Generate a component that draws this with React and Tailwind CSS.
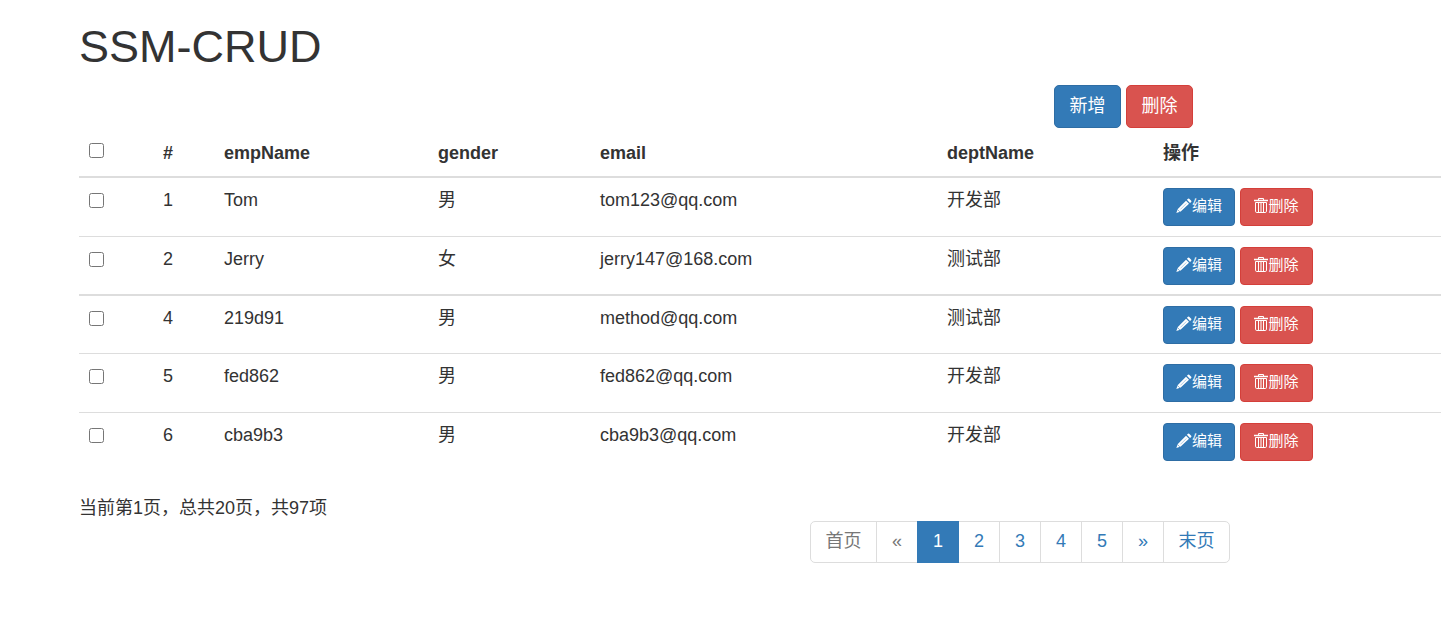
import React from "react";

const employees = [
  { id: 1, name: "Tom", gender: "男", email: "tom123@qq.com", dept: "开发部" },
  { id: 2, name: "Jerry", gender: "女", email: "jerry147@168.com", dept: "测试部" },
  { id: 4, name: "219d91", gender: "男", email: "method@qq.com", dept: "测试部" },
  { id: 5, name: "fed862", gender: "男", email: "fed862@qq.com", dept: "开发部" },
  { id: 6, name: "cba9b3", gender: "男", email: "cba9b3@qq.com", dept: "开发部" },
];

const rowStyles = [
  "h-[59px]",
  "h-[59px] border-t border-[#ddd]",
  "h-[58px] border-t-2 border-[#ddd]",
  "h-[59px] border-t border-[#ddd]",
  "h-[59px] border-t border-[#ddd]",
];

const pages = [
  { label: "首页", width: "w-[67px]", tone: "border-[#ddd] text-[#777]" },
  { label: "«", width: "w-[42px]", tone: "border-[#ddd] text-[#777]" },
  { label: "1", width: "w-[42px]", tone: "relative z-10 border-[#337ab7] bg-[#337ab7] text-white", current: true },
  { label: "2", width: "w-[42px]", tone: "border-[#ddd] text-[#337ab7]" },
  { label: "3", width: "w-[42px]", tone: "border-[#ddd] text-[#337ab7]" },
  { label: "4", width: "w-[42px]", tone: "border-[#ddd] text-[#337ab7]" },
  { label: "5", width: "w-[42px]", tone: "border-[#ddd] text-[#337ab7]" },
  { label: "»", width: "w-[42px]", tone: "border-[#ddd] text-[#337ab7]" },
  { label: "末页", width: "w-[67px]", tone: "border-[#ddd] text-[#337ab7]" },
];

function PencilIcon() {
  return (
    <svg className="h-4 w-4 shrink-0" viewBox="0 0 16 16" fill="currentColor" aria-hidden="true">
      <path d="M0.3 15 1.8 10.9 10 2.7 13 5.7 4.7 13.6Z" />
      <path d="M10.9 1.8 12 0.7Q12.6 0.2 13.2 0.7L15.2 2.7Q15.7 3.3 15.2 3.9L14 4.9Z" />
      <path d="M1.7 11.8 3.9 13.9" stroke="#337ab7" strokeWidth="0.6" />
      <path d="M4.4 11.4 10.4 5.4" stroke="#337ab7" strokeWidth="0.4" />
    </svg>
  );
}

function TrashIcon() {
  return (
    <svg className="h-4 w-[14px] shrink-0" viewBox="0 0 14 16" fill="none" stroke="currentColor" aria-hidden="true">
      <path d="M4.5 2V0.5H9.5V2" />
      <path d="M0 2.5H14" strokeWidth="1.5" />
      <path d="M1.5 4.5H12.5V13.2Q12.5 14.5 11.2 14.5H2.8Q1.5 14.5 1.5 13.2Z" />
      <path d="M4.5 5V14M7 5V14M9.5 5V14" />
    </svg>
  );
}

const checkbox = "block h-[15px] w-[15px]";
const largeButton = "flex h-[43px] w-[67px] items-center justify-center rounded-[5px] border";
const smallButton =
  "flex h-[38px] items-center justify-center rounded-[4px] border pb-[2px] text-[15px] leading-[22px]";
const primary = "border-[#2e6da4] bg-[#337ab7] text-white";
const danger = "border-[#d43f3a] bg-[#d9534f] text-white";

export default function App() {
  return (
    <main className="bg-white pl-[79px] font-['Liberation_Sans','Noto_Sans_CJK_SC',sans-serif] text-[18px] leading-[25px] text-[#333]">
      <h1 className="pt-[22px] text-[45px] leading-[50px]">SSM-CRUD</h1>

      <div className="mt-[13px] flex justify-end gap-[5px] pr-[248px]">
        <button type="button" className={`${largeButton} ${primary}`}>新增</button>
        <button type="button" className={`${largeButton} ${danger}`}>删除</button>
      </div>

      <table className="w-full table-fixed border-collapse text-left">
        <colgroup>
          <col className="w-[74px]" />
          <col className="w-[61px]" />
          <col className="w-[214px]" />
          <col className="w-[162px]" />
          <col className="w-[347px]" />
          <col className="w-[216px]" />
          <col />
        </colgroup>
        <thead>
          <tr className="h-[49px] border-b-2 border-[#ddd] align-bottom">
            <th className="px-[10px] pb-[18px]">
              <input type="checkbox" aria-label="Select all" className={checkbox} />
            </th>
            <th className="px-[10px] pb-[10px]">#</th>
            <th className="px-[10px] pb-[10px]">empName</th>
            <th className="px-[10px] pb-[10px]">gender</th>
            <th className="px-[10px] pb-[10px]">email</th>
            <th className="px-[10px] pb-[10px]">deptName</th>
            <th className="px-[10px] pb-[10px]">操作</th>
          </tr>
        </thead>
        <tbody>
          {employees.map((e, i) => (
            <tr key={e.id} className={`align-top ${rowStyles[i]}`}>
              <td className="px-[10px] pt-[15px]">
                <input type="checkbox" aria-label={`Select ${e.name}`} className={checkbox} />
              </td>
              <td className="px-[10px] pt-[10px]">{e.id}</td>
              <td className="px-[10px] pt-[10px]">{e.name}</td>
              <td className="px-[10px] pt-[10px]">{e.gender}</td>
              <td className="px-[10px] pt-[10px]">{e.email}</td>
              <td className="px-[10px] pt-[10px]">{e.dept}</td>
              <td className="px-[10px] pt-[10px]">
                <div className="flex gap-[5px]">
                  <button type="button" className={`${smallButton} ${primary} w-[72px]`}>
                    <PencilIcon />
                    编辑
                  </button>
                  <button type="button" className={`${smallButton} ${danger} w-[73px]`}>
                    <TrashIcon />
                    删除
                  </button>
                </div>
              </td>
            </tr>
          ))}
        </tbody>
      </table>

      <div className="mt-[25px] flex">
        <p className="w-[731px] shrink-0">当前第1页，总共20页，共97项</p>
        <nav aria-label="Pagination" className="mt-[25px] pb-[25px]">
          <ul className="flex">
            {pages.map((p) => (
              <li key={p.label} className="group -ml-px first:ml-0">
                <a
                  href="#"
                  aria-current={p.current ? "page" : undefined}
                  className={`flex h-[42px] items-center justify-center border pb-[2px] group-first:rounded-l-[5px] group-last:rounded-r-[5px] ${p.width} ${p.tone}`}
                >
                  {p.label}
                </a>
              </li>
            ))}
          </ul>
        </nav>
      </div>
    </main>
  );
}
